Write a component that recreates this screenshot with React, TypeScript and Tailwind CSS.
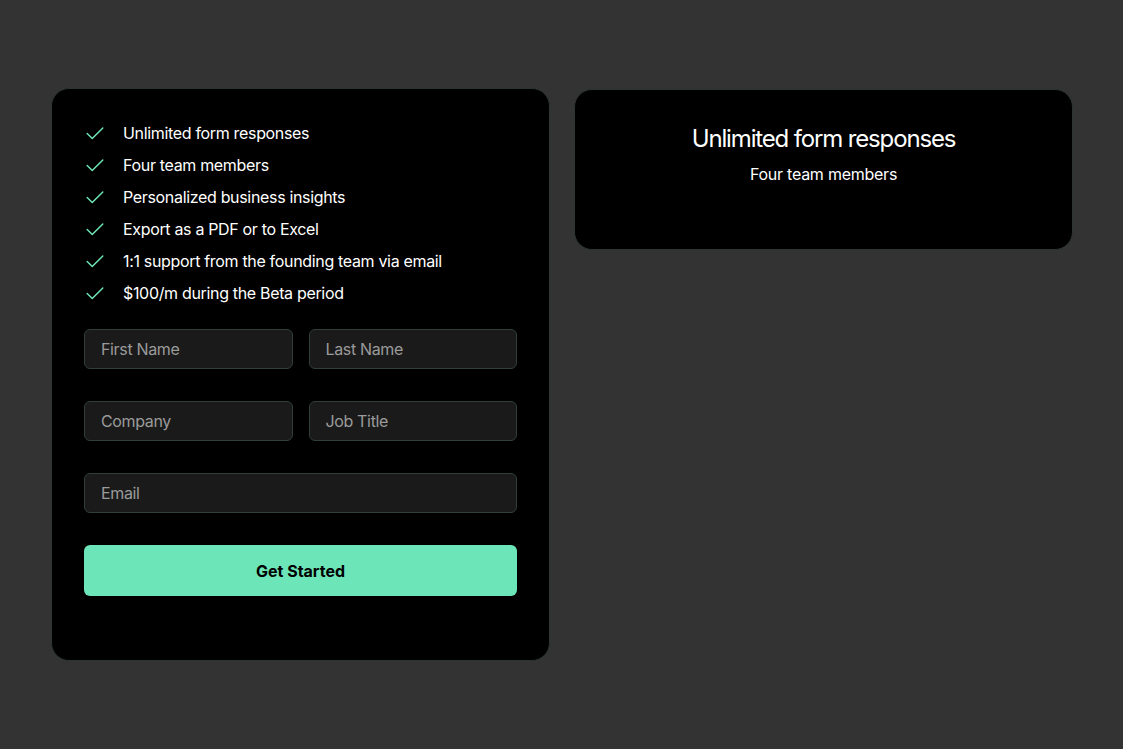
import React from "react";

const features = [
  "Unlimited form responses",
  "Four team members",
  "Personalized business insights",
  "Export as a PDF or to Excel",
  "1:1 support from the founding team via email",
  "$100/m during the Beta period",
];

function Check() {
  return (
    <svg viewBox="0 0 24 24" className="w-[22px] h-[22px] text-[#6ee7b7]" fill="none" stroke="currentColor" strokeWidth={1.6} strokeLinecap="round" strokeLinejoin="round">
      <path d="M3.5 12.5l5.5 5.5L20.5 6.5" />
    </svg>
  );
}

function Field({ placeholder }: { placeholder: string }) {
  return (
    <input
      placeholder={placeholder}
      className="h-[40px] w-full rounded-md border border-[#2f4039] bg-[#1a1a1a] px-4 text-[16px] tracking-[-0.35px] text-white placeholder:text-[#9a9a9a] outline-none"
    />
  );
}

export default function App() {
  return (
    <div className="min-h-[749px] w-full bg-[#333333] font-['Inter','Liberation_Sans',sans-serif]">
      <div className="flex items-start gap-6 pl-[51px] pt-[88px]">
        <div className="w-[499px] h-[573px] rounded-[18px] border border-[#2b3531] bg-black px-8 pt-8">
          <ul className="flex flex-col gap-2">
            {features.map((f) => (
              <li key={f} className="flex items-center h-6 text-white text-[16px] tracking-[-0.33px]">
                <span className="w-[39px] flex items-center"><Check /></span>
                <span>{f}</span>
              </li>
            ))}
          </ul>
          <div className="mt-6 grid grid-cols-2 gap-x-4 gap-y-8">
            <Field placeholder="First Name" />
            <Field placeholder="Last Name" />
            <Field placeholder="Company" />
            <Field placeholder="Job Title" />
            <div className="col-span-2">
              <Field placeholder="Email" />
            </div>
          </div>
          <button className="mt-8 h-[51px] w-full rounded-md bg-[#6ce6b8] text-[16px] font-bold text-black">
            Get Started
          </button>
        </div>
        <div className="mt-px w-[499px] h-[161px] rounded-[18px] border border-[#2b3531] bg-black pt-[33px] text-center text-white">
          <div className="text-[24px] leading-8 tracking-[-1.15px]">Unlimited form responses</div>
          <div className="mt-[7px] text-[16px] leading-6 tracking-[-0.25px]">Four team members</div>
        </div>
      </div>
    </div>
  );
}
